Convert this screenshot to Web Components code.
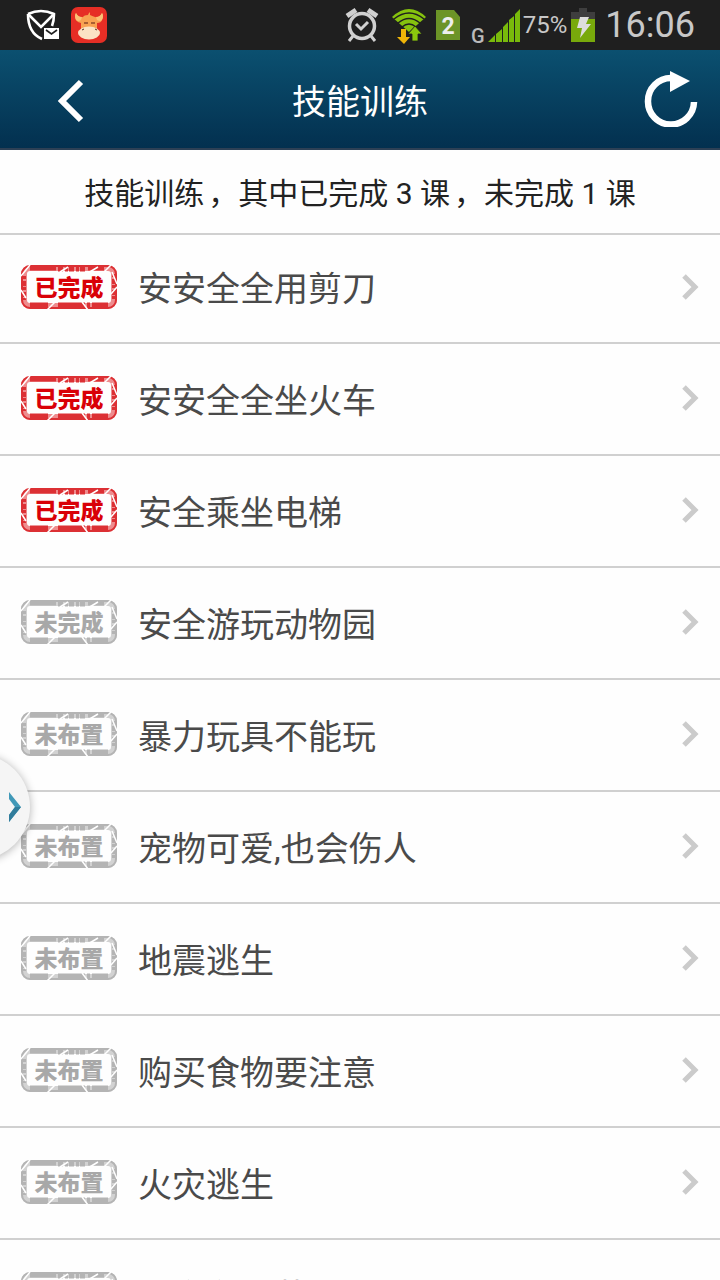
<!DOCTYPE html>
<html lang="zh-CN">
<head>
<meta charset="utf-8">
<meta name="viewport" content="width=device-width, initial-scale=1">
<title>技能训练</title>
<style>
    html, body {
        margin: 0;
        height: 100%;
    }

    body {
        overflow: hidden;
        background: #fefefe;
        color: #4a4a4a;
        font-family: Roboto, "Noto Sans CJK SC", sans-serif;
    }
</style>
</head>
<body>
<training-app></training-app>

<script>
class StatusBar extends HTMLElement {
    constructor() {
        super();
        this.attachShadow({ mode: "open" }).innerHTML = `
            <style>
                :host {
                    display: flex;
                    align-items: center;
                    justify-content: space-between;
                    height: 50px;
                    padding: 0 25px 0 26px;
                    background: #1f1f1f;
                    color: #c8c8c8;
                }

                div {
                    display: flex;
                    align-items: center;
                }

                .apps {
                    gap: 10px;
                }

                .system {
                    gap: 4px;
                }

                svg {
                    display: block;
                    flex: none;
                    overflow: visible;
                }

                .percent {
                    font-size: 24px;
                }

                .clock {
                    font-size: 36px;
                    margin-left: 6px;
                }
            </style>
            <div class="apps">
                <svg width="34" height="34" viewBox="0 0 34 34">
                    <path d="M2 6Q15 0 28 6Q28 13 26 18M2 6Q2 25 16 31" fill="none" stroke="#fff" stroke-width="2.6"/>
                    <path d="M3 7L15 19L27 7" fill="none" stroke="#fff" stroke-width="2.6"/>
                    <path d="M18 20h15v11H18z" fill="#fff"/>
                    <path d="M20 22l5.500 4l5.500-4" fill="none" stroke="#1f1f1f" stroke-width="1.600"/>
                </svg>
                <svg width="38" height="38" viewBox="0 0 38 38">
                    <rect x="1" y="1" width="36" height="36" rx="7" fill="#e62e25"/>
                    <path d="M6 7Q4 10 6 14Q8 17 11 17V24H27V17Q31 17 32 14Q34 10 32 7Q30 12 25 11Q22 10 20 9V6Q18 8 18 9Q14 9 13 11Q8 12 6 7Z" fill="#f8a252"/>
                    <path d="M6 7Q4 10 6 14Q8 16 11 14L12 11Q8 11 6 7ZM32 7Q34 10 32 14Q30 16 27 14L26 11Q30 11 32 7Z" fill="#fbc276"/>
                    <path d="M14 17h4M21 17h4" stroke="#8f4a28" stroke-width="1.500"/>
                    <ellipse cx="19" cy="27" rx="11" ry="6.500" fill="#fbe3c5"/>
                    <path d="M12 24l2-1M25 23l2 1" stroke="#5a3020"/>
                </svg>
            </div>
            <div class="system">
                <svg width="34" height="36" viewBox="0 0 34 36" fill="none" stroke="#d0d0d0">
                    <circle cx="17" cy="19" r="12.500" stroke-width="3.500"/>
                    <path d="M2 9l9-6M32 9l-9-6" stroke-width="5"/>
                    <path d="M8 29l-4 5M26 29l4 5" stroke-width="3"/>
                    <path d="M11 17l5 5l7-7" stroke-width="3"/>
                </svg>
                <svg width="48" height="38" viewBox="0 0 48 38">
                    <path d="M9 11Q26 -5 43 11L26 26z" fill="#86c20e"/>
                    <g fill="none" stroke="#1f1f1f" stroke-width="1.500">
                        <path d="M11 13Q26 1 41 13"/>
                        <path d="M15 17Q26 8 37 17"/>
                        <path d="M19 21Q26 15 33 21"/>
                    </g>
                    <path d="M18 23h5v8h4l-6 7l-7-7h4z" fill="#efb508"/>
                    <path d="M29 35h6v-7h4l-7-8l-7 8h4z" fill="#8bc70d" stroke="#1f1f1f" stroke-width=".8"/>
                </svg>
                <svg width="26" height="32" viewBox="0 0 26 32">
                    <path d="M1 1h18l6 7v23H1z" fill="#6c9427"/>
                    <text x="13" y="25" text-anchor="middle" font-size="23" font-weight="700" fill="#eee">2</text>
                </svg>
                <svg width="54" height="38" viewBox="0 0 54 38">
                    <text x="6" y="37" font-size="20" font-weight="500" fill="#bbb">G</text>
                    <path d="M23 36l7-7v7zM31 28l6-5v13h-6zM38 21l5-5v20h-5zM44 14l5-4v26h-5zM50 8l5-5v33h-5z" fill="#79ba0b"/>
                </svg>
                <span class="percent">75%</span>
                <svg width="24" height="36" viewBox="0 0 24 36">
                    <path d="M8 1h8v4h8v7H0V5h8z" fill="#3e3e3e"/>
                    <path d="M0 12h24v23H0z" fill="#78a90b"/>
                    <path d="M9 10h9l-3 7h5L9 31l2-10H6z" fill="#ddd"/>
                </svg>
                <span class="clock">16:06</span>
            </div>
        `;
    }
}

class NavBar extends HTMLElement {
    constructor() {
        super();
        this.attachShadow({ mode: "open" }).innerHTML = `
            <style>
                :host {
                    display: grid;
                    grid-template-columns: 100px 1fr 100px;
                    align-items: center;
                    box-sizing: border-box;
                    height: 100px;
                    border-bottom: 2px solid #2d4055;
                    background: linear-gradient(#0b5070, #03304f);
                    color: #fff;
                }

                button {
                    display: flex;
                    align-items: center;
                    justify-content: flex-end;
                    height: 98px;
                    padding: 0 20px;
                    border: 0;
                    background: none;
                }

                .back {
                    padding: 4px 16px 0;
                }

                h1 {
                    margin: 0;
                    padding-top: 6px;
                    font-size: 34px;
                    font-weight: 400;
                    line-height: 50px;
                    text-align: center;
                }
            </style>
            <button class="back" type="button" aria-label="返回">
                <svg width="28" height="44" viewBox="0 0 28 44">
                    <path d="M25 3L6 22L25 41" fill="none" stroke="#fff" stroke-width="6"/>
                </svg>
            </button>
            <h1><slot></slot></h1>
            <button class="reload" type="button" aria-label="刷新">
                <svg width="56" height="56" viewBox="0 0 56 56">
                    <path d="M27 7A23 23 0 0 0 4 30A23 23 0 0 0 50 31" fill="none" stroke="#fff" stroke-width="6.500"/>
                    <path d="M26 0L46 10L26 21z" fill="#fff"/>
                </svg>
            </button>
        `;
    }
}

class StatusStamp extends HTMLElement {
    constructor() {
        super();
        this.attachShadow({ mode: "open" }).innerHTML = `
            <style>
                :host {
                    display: grid;
                    place-items: center;
                    width: 98px;
                    height: 46px;
                    color: #a8a8a8;
                    --frame: #b4b4b4;
                    --faint: #d2d2d2;
                }

                :host([done]) {
                    color: #d90007;
                    --frame: #dc3034;
                    --faint: #ee8c8e;
                }

                svg, span {
                    grid-area: 1 / 1;
                }

                span {
                    padding-top: 4px;
                    font-size: 23px;
                    font-weight: 900;
                    line-height: 30px;
                }
            </style>
            <svg width="98" height="46" viewBox="0 0 98 46" fill="none">
                <rect x="4" y="4" width="90" height="38" rx="6" stroke="var(--faint)" stroke-width="6"/>
                <rect x="2" y="2" width="94" height="42" rx="8" stroke="var(--frame)" stroke-width="2"/>
                <path d="M10 4H36M68 4H84M10 41H28M38 41H60M72 41H88" stroke="var(--frame)" stroke-width="5"/>
                <path d="M38 5H66M60 41H70" stroke="var(--frame)" stroke-width="5" stroke-dasharray="5 2 3 1"/>
                <path d="M4 12V36M94 10V36" stroke="var(--frame)" stroke-width="4" stroke-dasharray="3 2 5 1"/>
                <path d="M1 12L10 1M1 26l5 8M84 8l8-8M92 8l5 12M91 30l6-7M27 46l9-9M62 38l6 8M68 9L78 3M40 8l8-5" stroke="#fff" stroke-width="1.500"/>
            </svg>
            <span><slot></slot></span>
        `;
    }
}

class LessonRow extends HTMLElement {
    constructor() {
        super();
        this.attachShadow({ mode: "open" }).innerHTML = `
            <style>
                :host {
                    display: block;
                    border-bottom: 2px solid #d0d0d0;
                }

                a {
                    display: flex;
                    align-items: center;
                    gap: 20px;
                    box-sizing: border-box;
                    height: 110px;
                    padding: 0 20px 2px;
                    color: inherit;
                    text-decoration: none;
                    font-size: 34px;
                    line-height: 50px;
                }

                :host(:first-of-type) a {
                    height: 107px;
                    padding-bottom: 4px;
                }

                .name {
                    flex: 1;
                    padding-top: 5px;
                    white-space: nowrap;
                }
            </style>
            <a href="#">
                <slot name="stamp"></slot>
                <span class="name"><slot></slot></span>
                <svg width="20" height="28" viewBox="0 0 20 28">
                    <path d="M4 3L15 14L4 25" fill="none" stroke="#cbcbcb" stroke-width="5"/>
                </svg>
            </a>
        `;
    }
}

class DrawerHandle extends HTMLElement {
    constructor() {
        super();
        this.attachShadow({ mode: "open" }).innerHTML = `
            <style>
                /* floats over the list at the left edge */
                :host {
                    position: absolute;
                    left: 0;
                    top: 750px;
                    width: 44px;
                    height: 116px;
                    overflow: hidden;
                }

                button {
                    position: absolute;
                    right: 14px;
                    top: 4px;
                    display: flex;
                    align-items: center;
                    justify-content: flex-end;
                    width: 106px;
                    height: 106px;
                    padding: 0 8px;
                    border: 0;
                    border-radius: 50%;
                    background: #f5f5f5;
                    box-shadow: 0 1px 8px rgba(0, 0, 0, 0.3);
                }
            </style>
            <button type="button" aria-label="展开">
                <svg width="14" height="32" viewBox="0 0 14 32">
                    <path d="M1 1L13 16L1 31V24L7 16L1 8z" fill="#4199b8"/>
                    <path d="M1 31V24L7 16L13 16z" fill="#317d9c"/>
                </svg>
            </button>
        `;
    }
}

class TrainingApp extends HTMLElement {
    #lessons = [
        ["已完成", "安安全全用剪刀"],
        ["已完成", "安安全全坐火车"],
        ["已完成", "安全乘坐电梯"],
        ["未完成", "安全游玩动物园"],
        ["未布置", "暴力玩具不能玩"],
        ["未布置", "宠物可爱,也会伤人"],
        ["未布置", "地震逃生"],
        ["未布置", "购买食物要注意"],
        ["未布置", "火灾逃生"],
        ["未布置", "公交车内莫打闹"]
    ];

    constructor() {
        super();
        this.attachShadow({ mode: "open" });
    }

    connectedCallback() {
        const rows = this.#lessons.map(([state, name]) => `
            <lesson-row>
                <status-stamp slot="stamp" ${state === "已完成" ? "done" : ""}>${state}</status-stamp>${name}
            </lesson-row>
        `).join("");

        this.shadowRoot.innerHTML = `
            <style>
                :host {
                    display: block;
                    position: relative;
                    height: 100%;
                    overflow: hidden;
                }

                .summary {
                    margin: 0;
                    padding: 22px 0 17px;
                    border-bottom: 2px solid #d0d0d0;
                    color: #222;
                    font-size: 30px;
                    line-height: 44px;
                    text-align: center;
                }

                .comma {
                    margin-left: 4px;
                }
            </style>
            <status-bar></status-bar>
            <nav-bar>技能训练</nav-bar>
            <p class="summary">技能训练<span class="comma">，</span>其中已完成 3 课<span class="comma">，</span>未完成 1 课</p>
            <main>${rows}</main>
            <drawer-handle></drawer-handle>
        `;
    }
}

customElements.define("status-bar", StatusBar);
customElements.define("nav-bar", NavBar);
customElements.define("status-stamp", StatusStamp);
customElements.define("lesson-row", LessonRow);
customElements.define("drawer-handle", DrawerHandle);
customElements.define("training-app", TrainingApp);
</script>
</body>
</html>
